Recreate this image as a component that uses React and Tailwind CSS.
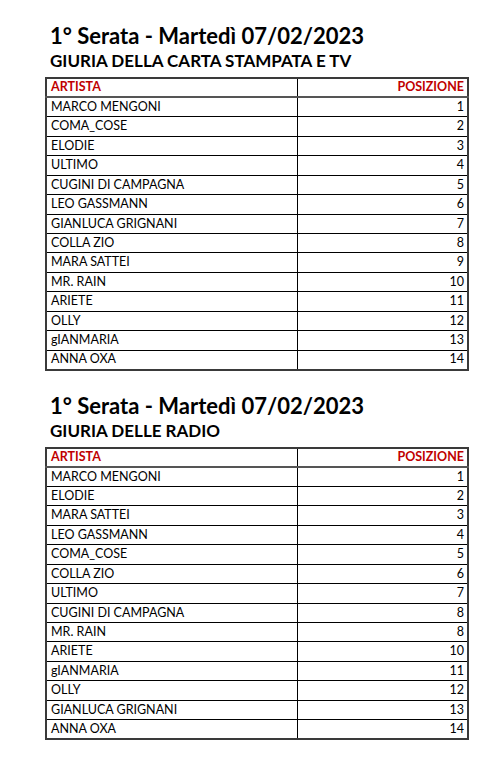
const serate = [
  {
    title: "1° Serata - Martedì 07/02/2023",
    giuria: "GIURIA DELLA CARTA STAMPATA E TV",
    rows: [
      ["MARCO MENGONI", 1],
      ["COMA_COSE", 2],
      ["ELODIE", 3],
      ["ULTIMO", 4],
      ["CUGINI DI CAMPAGNA", 5],
      ["LEO GASSMANN", 6],
      ["GIANLUCA GRIGNANI", 7],
      ["COLLA ZIO", 8],
      ["MARA SATTEI", 9],
      ["MR. RAIN", 10],
      ["ARIETE", 11],
      ["OLLY", 12],
      ["gIANMARIA", 13],
      ["ANNA OXA", 14],
    ],
  },
  {
    title: "1° Serata - Martedì 07/02/2023",
    giuria: "GIURIA DELLE RADIO",
    rows: [
      ["MARCO MENGONI", 1],
      ["ELODIE", 2],
      ["MARA SATTEI", 3],
      ["LEO GASSMANN", 4],
      ["COMA_COSE", 5],
      ["COLLA ZIO", 6],
      ["ULTIMO", 7],
      ["CUGINI DI CAMPAGNA", 8],
      ["MR. RAIN", 8],
      ["ARIETE", 10],
      ["gIANMARIA", 11],
      ["OLLY", 12],
      ["GIANLUCA GRIGNANI", 13],
      ["ANNA OXA", 14],
    ],
  },
];

const Classifica = ({ serata }) => (
  <section>
    <h1 className="pl-[50px] text-[22px] leading-[28px] font-bold text-black">{serata.title}</h1>
    <h2 className="pl-[50px] text-[17px] leading-[22px] font-bold text-black">{serata.giuria}</h2>
    <table className="ml-[45px] mt-[5px] w-[424px] border-collapse border-2 border-[#3a3a3a] text-[12.5px] text-black">
      <thead>
        <tr className="h-[19.45px] border-b-2 border-[#555]">
          <th className="w-[251px] border-r border-black pl-[4px] text-left font-bold leading-none text-[#c00000]">ARTISTA</th>
          <th className="pr-[3px] text-right font-bold leading-none text-[#c00000]">POSIZIONE</th>
        </tr>
      </thead>
      <tbody>
        {serata.rows.map(([artista, pos], i) => (
          <tr key={i} className="h-[19.45px] border-b border-black">
            <td className="border-r border-black pl-[4px] leading-none">{artista}</td>
            <td className="pr-[3px] text-right leading-none">{pos}</td>
          </tr>
        ))}
      </tbody>
    </table>
  </section>
);

export default function App() {
  return (
    <main className="min-h-screen bg-white pt-[22px] font-['Lato',sans-serif]">
      <Classifica serata={serate[0]} />
      <div className="h-[21px]" />
      <Classifica serata={serate[1]} />
    </main>
  );
}
